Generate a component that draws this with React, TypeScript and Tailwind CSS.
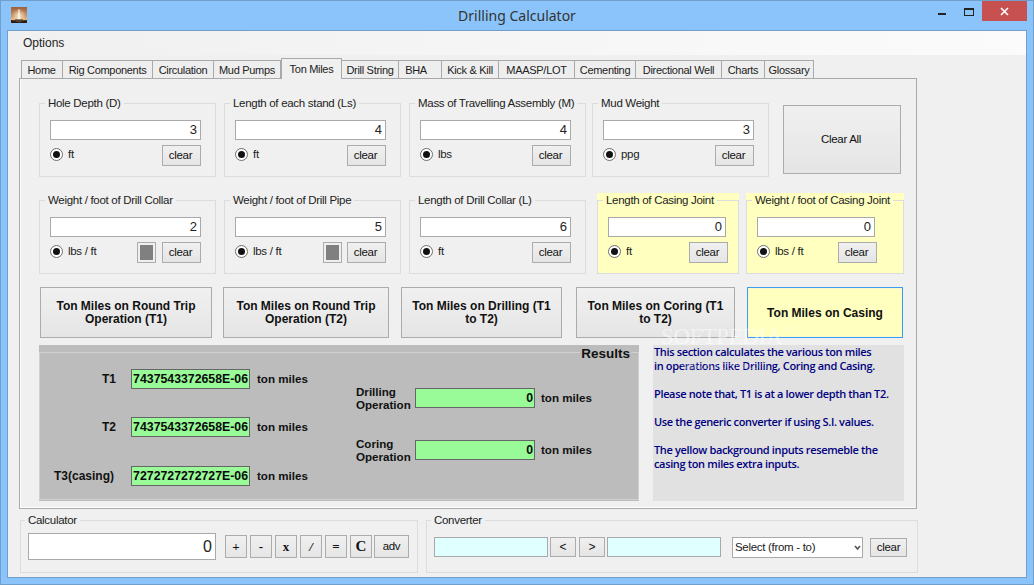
import React from "react";

const FONT = "[font-family:'Liberation_Sans',Arial,sans-serif]";
const LABEL = "text-[11.5px] tracking-[-0.3px] whitespace-nowrap";
const TAB = "text-[11px] tracking-[-0.3px] whitespace-nowrap";

function Btn({ className = "", children }: { className?: string; children?: React.ReactNode }) {
  return (
    <div className={`flex shrink-0 items-center justify-center border border-[#acacac] bg-gradient-to-b from-[#f0f0f0] to-[#e5e5e5] text-center text-[#111] ${className}`}>
      {children}
    </div>
  );
}

function Radio({ label }: { label: string }) {
  return (
    <div className="flex items-center gap-[5px] self-start pt-[2px]">
      <span className="flex h-[13px] w-[13px] items-center justify-center rounded-full border border-[#6e6e6e] bg-white">
        <span className="h-[7px] w-[7px] rounded-full bg-[#111]" />
      </span>
      <span className={`${LABEL} pt-[1px] leading-[13px] text-[#222]`}>{label}</span>
    </div>
  );
}

function Group({
  title,
  value,
  unit,
  width = "w-[177px]",
  inputWidth = "w-[151px]",
  rowWidth = "w-[151px]",
  swatch = "",
}: {
  title: string;
  value: string;
  unit: string;
  width?: string;
  inputWidth?: string;
  rowWidth?: string;
  swatch?: string;
}) {
  return (
    <fieldset className={`h-[81px] shrink-0 border border-[#dcdcdc] pl-[10px] ${width}`}>
      <legend className={`-ml-[5px] h-[14px] px-[3px] leading-[14px] text-[#222] ${LABEL}`}>{title}</legend>
      <div className={`mt-[10px] flex h-[20px] items-center justify-end border border-[#a9a9a9] bg-white pr-[3px] text-[13px] text-[#222] ${inputWidth}`}>
        {value}
      </div>
      <div className={`mt-[5px] flex h-[21px] items-start ${rowWidth}`}>
        <Radio label={unit} />
        <div className="ml-auto flex gap-[5px]">
          {swatch && (
            <div className={`flex h-[21px] w-[19px] items-center justify-center border border-[#acacac] bg-[#efefef] ${swatch}`}>
              <div className="h-[15px] w-[13px] bg-[#808080]" />
            </div>
          )}
          <Btn className={`h-[21px] w-[39px] pr-[2px] pt-[1px] ${LABEL}`}>clear</Btn>
        </div>
      </div>
    </fieldset>
  );
}

function Output({ value, width = "w-[119px]" }: { value: string; width?: string }) {
  return (
    <div className={`flex h-[20px] shrink-0 items-center justify-end overflow-hidden border border-[#666] bg-[#98fb98] pr-[1px] text-[12.3px] font-bold text-[#0a0a0a] ${width}`}>
      {value}
    </div>
  );
}

function ResultRow({ label, value, className = "", labelClass = "" }: { label: string; value: string; className?: string; labelClass?: string }) {
  return (
    <div className={`flex h-[20px] items-center ${className}`}>
      <div className={`w-[76px] text-right text-[12px] font-bold leading-none text-[#111] ${labelClass}`}>{label}</div>
      <div className="ml-[15px]">
        <Output value={value} />
      </div>
      <div className="ml-[7px] text-[11.6px] font-bold text-[#111]">ton miles</div>
    </div>
  );
}

function OpRow({ label, value, className = "" }: { label: React.ReactNode; value: string; className?: string }) {
  return (
    <div className={`flex h-[26px] items-center ${className}`}>
      <div className="w-[59px] text-[11.6px] font-bold leading-[13px] text-[#111]">{label}</div>
      <Output value={value} width="w-[120px]" />
      <div className="ml-[6px] text-[11.6px] font-bold text-[#111]">ton miles</div>
    </div>
  );
}

const TABS: { label: string; w: string; active?: boolean; extra?: string }[] = [
  { label: "Home", w: "w-[42px]", extra: "pr-[1px]" },
  { label: "Rig Components", w: "w-[90px]" },
  { label: "Circulation", w: "w-[61px]" },
  { label: "Mud Pumps", w: "w-[67px]" },
  { label: "Ton Miles", w: "w-[61px]", active: true },
  { label: "Drill String", w: "w-[57px]" },
  { label: "BHA", w: "w-[43px]", extra: "pr-[8px]" },
  { label: "Kick & Kill", w: "w-[57px]" },
  { label: "MAASP/LOT", w: "w-[76px]" },
  { label: "Cementing", w: "w-[61px]" },
  { label: "Directional Well", w: "w-[86px]" },
  { label: "Charts", w: "w-[43px]" },
  { label: "Glossary", w: "w-[49px]" },
];

function BigBtn({ width, children, className = "" }: { width: string; children: React.ReactNode; className?: string }) {
  return <Btn className={`h-[51px] pt-[1px] text-[12px] font-bold leading-[13px] ${width} ${className}`}>{children}</Btn>;
}

export default function App() {
  return (
    <div className={`relative flex h-[585px] w-[1034px] flex-col overflow-hidden border border-[#6f9fca] bg-[#8ac4fa] ${FONT}`}>
      {/* Title bar */}
      <div className="grid h-[29px] shrink-0 grid-cols-[1fr_auto_1fr] items-start">
        <div className="pl-[10px] pt-[6px]">
          <svg width="16" height="16" viewBox="0 0 16 16">
            <defs>
              <linearGradient id="sky" x1="0" y1="0" x2="0" y2="1">
                <stop offset="0" stopColor="#9a5f3c" />
                <stop offset="0.6" stopColor="#cf9a68" />
                <stop offset="0.78" stopColor="#e8b67a" />
                <stop offset="0.85" stopColor="#3a2416" />
                <stop offset="1" stopColor="#24150d" />
              </linearGradient>
              <radialGradient id="glow" cx="0.5" cy="0.55" r="0.45">
                <stop offset="0" stopColor="#fff2d8" stopOpacity="0.85" />
                <stop offset="1" stopColor="#fff2d8" stopOpacity="0" />
              </radialGradient>
            </defs>
            <rect width="16" height="16" fill="url(#sky)" />
            <rect width="16" height="16" fill="url(#glow)" />
            <path d="M7.6 2h.8l.9 11H6.7z" fill="#fbf1dc" />
            <rect x="4" y="12.5" width="8" height="1" fill="#2a1a12" />
          </svg>
        </div>
        <div className="pt-[6px] text-[14px] leading-[18px] text-[#333] [font-family:'Noto_Sans',sans-serif]">Drilling Calculator</div>
        <div className="flex justify-end pr-[6px]">
          <div className="mt-[12px] h-[2px] w-[8px] bg-[#222]" />
          <div className="ml-[18px] mr-[8px] mt-[7px] h-[8px] w-[10px] border border-t-2 border-[#222]" />
          <div className="flex h-[20px] w-[45px] items-center justify-center bg-[#c75050] text-white">
            <svg width="9" height="9" viewBox="0 0 9 9" fill="none" stroke="#fff" strokeWidth="1.6">
              <path d="M1 1l7 7M8 1l-7 7" />
            </svg>
          </div>
        </div>
      </div>

      {/* Client */}
      <div className="mx-[6px] flex h-[548px] shrink-0 flex-col border border-[#6f9fca] bg-[#f0f0f0] text-[#222]">
        {/* Menu */}
        <div className="flex h-[24px] shrink-0 items-center bg-gradient-to-r from-[#f0f0f0] to-[#fbfbfb] pl-[15px] text-[12px] text-[#222]">
          Options
        </div>

        {/* Tabs */}
        <div className="ml-[13px] mt-[3px] flex h-[20px] shrink-0 items-end">
          {TABS.map((t) =>
            t.active ? (
              <div
                key={t.label}
                className={`relative z-10 -mb-px flex h-[21px] items-center justify-center border border-b-0 border-[#a9a9a9] bg-[#f0f0f0] ${TAB} ${t.w}`}
              >
                {t.label}
              </div>
            ) : (
              <div
                key={t.label}
                className={`flex h-[18px] items-center justify-center border border-b-0 border-l-0 border-[#a9a9a9] bg-[#eeeeee] pt-[2px] first:border-l ${TAB} ${t.w} ${t.extra ?? ""}`}
              >
                {t.label}
              </div>
            ),
          )}
        </div>

        {/* Panel */}
        <div className="ml-[11px] flex h-[431px] w-[898px] shrink-0 flex-col border border-[#a9a9a9] bg-[#f0f0f0] pl-[19px] shadow-[inset_1px_-1px_0_#ffffff]">
          <div className="mt-[17px] flex h-[81px] shrink-0 items-start">
            <Group title="Hole Depth (D)" value="3" unit="ft" />
            <div className="ml-[8px]">
              <Group title="Length of each stand (Ls)" value="4" unit="ft" />
            </div>
            <div className="ml-[8px]">
              <Group title="Mass of Travelling Assembly (M)" value="4" unit="lbs" />
            </div>
            <div className="ml-[6px]">
              <Group title="Mud Weight" value="3" unit="ppg" />
            </div>
            <Btn className={`ml-[14px] mt-[9px] h-[69px] w-[118px] pr-[2px] pt-[1px] ${LABEL}`}>Clear All</Btn>
          </div>

          <div className="mt-[16px] flex h-[81px] shrink-0 items-start">
            <Group title="Weight / foot of Drill Collar" value="2" unit="lbs / ft" swatch="mr-[1px]" />
            <div className="ml-[8px]">
              <Group title="Weight / foot of Drill Pipe" value="5" unit="lbs / ft" swatch="mr-0" />
            </div>
            <div className="ml-[8px]">
              <Group title="Length of Drill Collar (L)" value="6" unit="ft" />
            </div>
            <div className="ml-[11px] bg-[#ffffc0]">
              <Group title="Length of Casing Joint" value="0" unit="ft" width="w-[142px]" inputWidth="w-[118px]" rowWidth="w-[120px]" />
            </div>
            <div className="ml-[7px] bg-[#ffffc0]">
              <Group title="Weight / foot of Casing Joint" value="0" unit="lbs / ft" width="w-[158px]" inputWidth="w-[118px]" rowWidth="w-[120px]" />
            </div>
          </div>

          <div className="ml-[1px] mt-[13px] flex h-[51px] shrink-0 items-start">
            <BigBtn width="w-[172px]">Ton Miles on Round Trip<br />Operation (T1)</BigBtn>
            <BigBtn width="w-[166px]" className="ml-[11px]">Ton Miles on Round Trip<br />Operation (T2)</BigBtn>
            <BigBtn width="w-[161px]" className="ml-[12px]">Ton Miles on Drilling (T1<br />to T2)</BigBtn>
            <BigBtn width="w-[159px]" className="ml-[14px]">Ton Miles on Coring (T1<br />to T2)</BigBtn>
            <div className="ml-[12px] flex h-[51px] w-[156px] items-center justify-center border border-[#3c9cf0] bg-[#ffffc0] text-[12px] font-bold text-[#111] shadow-[inset_0_0_0_1px_#f7f7d0]">
              Ton Miles on Casing
            </div>
          </div>

          <div className="mt-[7px] flex h-[156px] shrink-0 items-start">
            <div className="h-[156px] w-[600px] shrink-0 bg-[#bcbcbc]">
              <fieldset className="h-[155px] border border-[#d0d0d0]">
                <legend className="ml-auto mr-[7px] h-[15px] px-[1px] text-[13.5px] font-bold leading-[17px] text-[#111]">Results</legend>
                <div className="flex">
                  <div className="w-[316px] shrink-0 pt-[9px]">
                    <ResultRow label="T1" value="7437543372658E-06" />
                    <ResultRow label="T2" value="7437543372658E-06" className="mt-[28px]" />
                    <ResultRow label="T3(casing)" value="7272727272727E-06" className="mt-[29px]" labelClass="pr-[2px]" />
                  </div>
                  <div className="pt-[25px]">
                    <OpRow label={<>Drilling<br />Operation</>} value="0" />
                    <OpRow label={<>Coring<br />Operation</>} value="0" className="mt-[26px]" />
                  </div>
                </div>
              </fieldset>
            </div>
            <div className="ml-[14px] h-[156px] w-[251px] shrink-0 whitespace-nowrap bg-[#e1e1e1] pl-[1px] text-[11px] font-semibold leading-[14px] tracking-[-0.35px] text-[#000080] [font-family:'Open_Sans',sans-serif]">
              This section calculates the various ton miles<br />
              in operations like Drilling, Coring and Casing.<br />
              <br />
              Please note that, T1 is at a lower depth than T2.<br />
              <br />
              Use the generic converter if using S.I. values.<br />
              <br />
              The yellow background inputs resemeble the<br />
              casing ton miles extra inputs.
            </div>
          </div>
        </div>

        {/* Bottom */}
        <div className="ml-[12px] mt-[4px] flex shrink-0 gap-[8px]">
          <fieldset className="h-[60px] w-[398px] shrink-0 border border-[#dcdcdc] pl-[7px]">
            <legend className={`-ml-[3px] h-[14px] px-[3px] leading-[14px] ${LABEL}`}>Calculator</legend>
            <div className="mt-[6px] flex items-center">
              <div className="flex h-[27px] w-[188px] items-center justify-end border border-[#a9a9a9] bg-white pr-[3px] text-[16px]">0</div>
              <div className="ml-[9px] flex gap-[3px] text-[13px] font-bold [font-family:'Liberation_Serif',serif]">
                <Btn className="h-[23px] w-[22px]">+</Btn>
                <Btn className="h-[23px] w-[22px]">-</Btn>
                <Btn className="h-[23px] w-[22px]">x</Btn>
                <Btn className="h-[23px] w-[22px] italic">/</Btn>
                <Btn className="h-[23px] w-[22px]">=</Btn>
                <Btn className="h-[23px] w-[22px] text-[15px]">C</Btn>
              </div>
              <Btn className={`ml-[2px] h-[23px] w-[35px] ${LABEL}`}>adv</Btn>
            </div>
          </fieldset>
          <fieldset className="h-[60px] w-[492px] shrink-0 border border-[#dcdcdc] pl-[7px]">
            <legend className={`-ml-[3px] h-[14px] px-[3px] leading-[14px] ${LABEL}`}>Converter</legend>
            <div className="mt-[10px] flex items-start">
              <div className="h-[20px] w-[114px] border border-[#a9a9a9] bg-[#e0ffff]" />
              <Btn className="ml-[2px] h-[20px] w-[26px] text-[12px]">&lt;</Btn>
              <Btn className="ml-[3px] h-[20px] w-[26px] text-[12px]">&gt;</Btn>
              <div className="ml-[2px] h-[20px] w-[114px] border border-[#a9a9a9] bg-[#e0ffff]" />
              <div className={`ml-[11px] flex h-[21px] w-[131px] items-center justify-between border border-[#a9a9a9] bg-white pl-[2px] pr-[1px] ${LABEL}`}>
                <span>Select (from - to)</span>
                <svg width="7" height="6" viewBox="0 0 7 6" fill="none" stroke="#555" strokeWidth="1.6">
                  <path d="M1 1l2.5 3 2.5-3" />
                </svg>
              </div>
              <Btn className={`ml-[7px] mt-[1px] h-[19px] w-[37px] ${LABEL}`}>clear</Btn>
            </div>
          </fieldset>
        </div>
      </div>

      {/* Watermark */}
      <div className="pointer-events-none absolute left-[660px] top-[324px] text-[23px] leading-[24px] tracking-[-0.3px] text-white/50 [font-family:'Liberation_Serif',serif]">
        SOFTPEDIA
      </div>
      <div className="pointer-events-none absolute left-[784px] top-[325px] text-[7px] leading-[8px] text-white/60">™</div>
      <div className="pointer-events-none absolute left-[680px] top-[359px] text-[10px] leading-[12px] text-white/40">www.softpedia.com</div>
    </div>
  );
}
